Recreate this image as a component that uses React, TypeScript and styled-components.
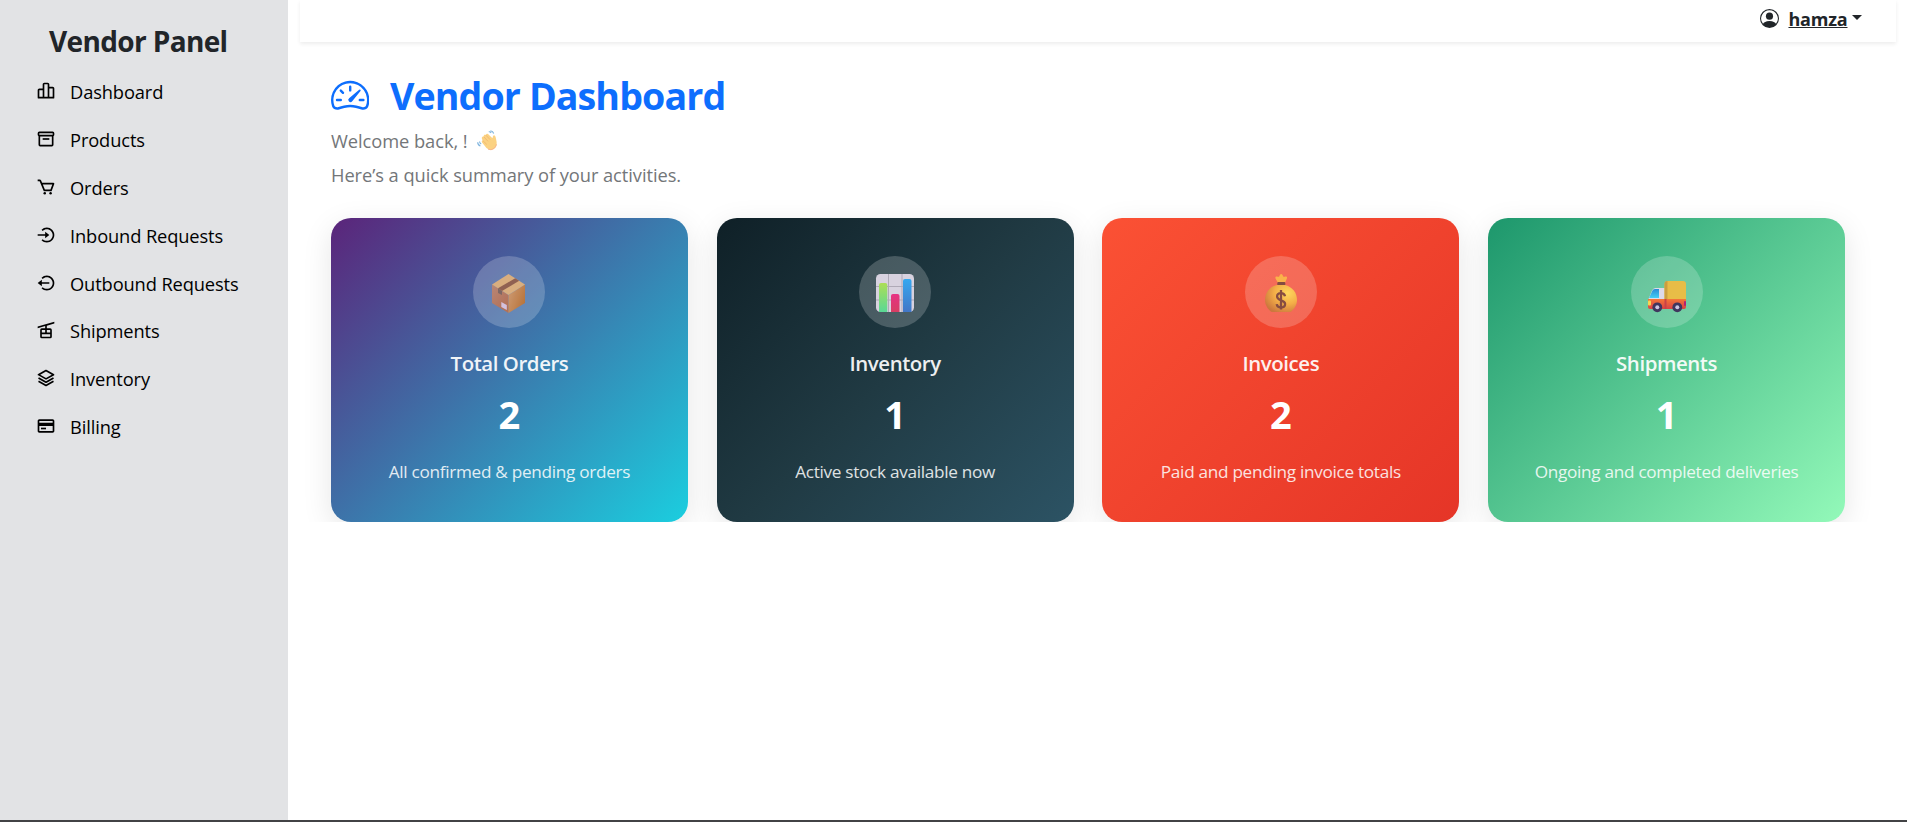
import React from 'react';
import styled, { createGlobalStyle } from 'styled-components';
import type { IconType } from 'react-icons';
import {
  BiBarChartAlt2,
  BiBox,
  BiCart,
  BiLogInCircle,
  BiLogOutCircle,
  BiCableCar,
  BiLayer,
  BiCreditCard,
} from 'react-icons/bi';
import { BsPersonCircle, BsSpeedometer2 } from 'react-icons/bs';

const GlobalStyle = createGlobalStyle`
  *, *::before, *::after { box-sizing: border-box; }
  body {
    margin: 0;
    background: #fff;
    color: #212529;
    font-family: 'Segoe UI', 'Open Sans', 'Noto Sans', sans-serif;
    overflow: hidden;
  }
  h1, h2, h3, p { margin: 0; }
`;

const Page = styled.div`
  display: flex;
  height: 822px;
  border-bottom: 2px solid #424345;
`;

const Sidebar = styled.aside`
  width: 288px;
  flex: none;
  padding-top: 21px;
  background: #e2e3e5;
`;

const Brand = styled.h3`
  padding-left: 49px;
  font-size: 28px;
  font-weight: 700;
  line-height: 40px;
  letter-spacing: -0.64px;
`;

const NavList = styled.nav`
  display: flex;
  flex-direction: column;
  padding-top: 6.8px;
`;

const NavItem = styled.a`
  display: flex;
  align-items: center;
  gap: 14.5px;
  height: 47.85px;
  padding-left: 35.5px;
  color: #000;
  font-size: 18.3px;
  letter-spacing: -0.12px;
  text-decoration: none;

  svg {
    flex: none;
    width: 20px;
    height: 20px;
    margin-top: -1px;
  }
`;

const Main = styled.main`
  flex: 1;
  min-width: 0;
  padding: 0 11px 0 12px;
`;

const TopBar = styled.header`
  display: flex;
  justify-content: flex-end;
  height: 42px;
  padding: 6px 34.5px 0 0;
  background: #fff;
  box-shadow: 0 2px 4px rgba(0, 0, 0, 0.075);
`;

const UserMenu = styled.div`
  display: flex;
  align-items: center;
  height: 25px;
  font-size: 18px;
  font-weight: 700;

  svg {
    width: 19px;
    height: 19px;
    margin-right: 9px;
  }
`;

const UserName = styled.span`
  letter-spacing: -0.2px;
  text-decoration: underline;
  text-decoration-thickness: 1px;
  text-underline-offset: 1px;
`;

const Caret = styled.span`
  margin: -3px 0 0 4px;
  border-top: 5px solid currentColor;
  border-left: 5px solid transparent;
  border-right: 5px solid transparent;
`;

const Content = styled.section`
  padding: 29px 51px 0 31px;
  overflow: hidden;
`;

const Heading = styled.h1`
  display: flex;
  align-items: center;
  height: 48px;
  color: #0d6efd;
  font-size: 37.6px;
  font-weight: 700;
  letter-spacing: -0.9px;

  svg {
    width: 38.4px;
    height: 38.4px;
    margin-right: 20.6px;
  }
`;

const Intro = styled.p`
  display: flex;
  align-items: center;
  height: 34px;
  color: #737679;
  font-size: 18.3px;
  letter-spacing: -0.06px;

  svg {
    width: 21px;
    height: 21px;
    margin-left: 9px;
  }
`;

const IntroBlock = styled.div`
  padding-top: 4px;
  margin-bottom: 27px;
`;

const CardGrid = styled.div`
  display: grid;
  grid-template-columns: repeat(4, 1fr);
  gap: 28.8px;
`;

const Card = styled.article<{ $fill: string }>`
  display: flex;
  flex-direction: column;
  align-items: center;
  height: 304px;
  padding-top: 38px;
  border-radius: 20px;
  background: linear-gradient(135deg, ${(p) => p.$fill});
  box-shadow: 0 8px 30px rgba(0, 0, 0, 0.1);
  color: #fff;
`;

const Badge = styled.div`
  width: 72px;
  height: 72px;
  border-radius: 50%;
  background: rgba(255, 255, 255, 0.2);

  svg {
    display: block;
    width: 72px;
    height: 72px;
    opacity: 0.93;
  }
`;

const CardTitle = styled.h3`
  margin-top: 20px;
  font-size: 20.4px;
  font-weight: 600;
  line-height: 30px;
  letter-spacing: -0.42px;
  opacity: 0.92;
`;

const CardValue = styled.h2`
  margin-top: 13px;
  font-size: 38px;
  font-weight: 700;
  line-height: 46px;
`;

const CardNote = styled.p`
  margin-top: 22px;
  font-size: 17.2px;
  line-height: 26px;
  letter-spacing: -0.3px;
  opacity: 0.85;
`;

const PackageArt = () => (
  <svg viewBox="0 0 72 72">
    <defs>
      <linearGradient id="boxLeft" x1="0" y1="0" x2="0.7" y2="1">
        <stop offset="0" stopColor="#bd8772" />
        <stop offset="1" stopColor="#b96f50" />
      </linearGradient>
      <linearGradient id="boxRight" x1="0" y1="0" x2="1" y2="0.6">
        <stop offset="0" stopColor="#d79f72" />
        <stop offset="1" stopColor="#bf7434" />
      </linearGradient>
    </defs>
    <path d="M19 28.5 35.5 39v18L19 47z" fill="url(#boxLeft)" />
    <path d="M35.5 39 52 28.5V47L35.5 57z" fill="url(#boxRight)" />
    <path d="M35.5 18 52 28.5 35.5 39 19 28.5z" fill="#e2b27c" />
    <path d="M25 32.3 42.2 22.2l4 2.6L29 35z" fill="#945f4b" />
    <path d="M25 32.3l4 2.7v4l-4-2z" fill="#80665f" />
    <path d="M28.3 46l5.5 3v5l-5.5-3z" fill="#dcc6e2" />
  </svg>
);

const ChartArt = () => (
  <svg viewBox="0 0 72 72">
    <defs>
      <linearGradient id="barGreen" x1="0" y1="0" x2="0" y2="1">
        <stop offset="0" stopColor="#b4e856" />
        <stop offset="1" stopColor="#5be29a" />
      </linearGradient>
      <linearGradient id="barPink" x1="0" y1="0" x2="0" y2="1">
        <stop offset="0" stopColor="#f32f87" />
        <stop offset="1" stopColor="#e23c64" />
      </linearGradient>
      <linearGradient id="barBlue" x1="0" y1="0" x2="0" y2="1">
        <stop offset="0" stopColor="#34aefb" />
        <stop offset="1" stopColor="#4279cf" />
      </linearGradient>
    </defs>
    <rect x="17" y="18" width="38" height="38" rx="4.5" fill="#e3dbe9" />
    <path d="M29.5 18v38M43 18v38M17 30.5h38M17 44h38" stroke="#b7afbe" />
    <path d="M20 56V29q0-2 2-2h4.3q2 0 2 2v27z" fill="url(#barGreen)" />
    <path d="M32 56V40q0-2 2-2h4.5q2 0 2 2v16z" fill="url(#barPink)" />
    <path d="M44 56V25q0-2 2-2h4.5q2 0 2 2v31z" fill="url(#barBlue)" />
  </svg>
);

const MoneyArt = () => (
  <svg viewBox="0 0 72 72">
    <defs>
      <radialGradient id="bag" cx="0.7" cy="0.3" r="0.8">
        <stop offset="0" stopColor="#ffe05e" />
        <stop offset="0.5" stopColor="#f5b547" />
        <stop offset="1" stopColor="#c9783c" />
      </radialGradient>
    </defs>
    <path
      d="M33 27 30.5 22.5q-.8-2.5 1.5-2 1.5.5 2 .2l1-2q1.2-1.5 2.4 0l1 2q.8.3 2-.2 2.4-.5 1.5 2L40 27z"
      fill="#fbb84a"
    />
    <rect x="32.3" y="26" width="8" height="3.4" rx="1" fill="#7c4a40" />
    <path d="M32 29h8c7 1.5 12 7.5 12 15 0 5-3 9.5-6.5 12h-19C23 53.5 20 49 20 44c0-7.5 5-13.5 12-15z" fill="url(#bag)" />
    <path
      d="M40 40.2c-.4-2-1.9-3-4-3s-3.9 1.2-3.900 3.400c0 4.800 8 2.700 8 7.400 0 2.300-1.700 3.500-4.100 3.500s-4-1.200-4.300-3.400M36 34v19.500"
      fill="none"
      stroke="#7f4b40"
      strokeWidth="2.3"
    />
  </svg>
);

const TruckArt = () => (
  <svg viewBox="0 0 72 72">
    <defs>
      <linearGradient id="truckBase" x1="0" y1="0" x2="0" y2="1">
        <stop offset="0" stopColor="#ff7030" />
        <stop offset="1" stopColor="#e2383f" />
      </linearGradient>
      <linearGradient id="truckGlass" x1="0" y1="0" x2="0" y2="1">
        <stop offset="0" stopColor="#2488dc" />
        <stop offset="1" stopColor="#3fd0fb" />
      </linearGradient>
    </defs>
    <path d="M17.5 43 21 34.500q1-2.500 3.500-2.500H34v12H17.500z" fill="#e6dcef" />
    <path d="M18 42l3.200-7q.8-2 2.800-2h4v9z" fill="url(#truckGlass)" />
    <path d="M33.5 44V28q0-3 3-3H52q3 0 3 3v16z" fill="#f2bc41" />
    <path d="M33.5 28q0-3 3-3v19h-3z" fill="#d39b38" />
    <path d="M17 43h38v8q0 2-2 2H19q-2 0-2-2z" fill="url(#truckBase)" />
    <path d="M33.5 43h2v10h-2z" fill="#cf3840" />
    <rect x="17" y="44.5" width="3" height="5" rx="1" fill="#ffd84d" />
    <rect x="53" y="45" width="2" height="5" rx="1" fill="#b91571" />
    <circle cx="26.3" cy="51.3" r="4.9" fill="#3d2b59" />
    <circle cx="46.3" cy="51.3" r="4.9" fill="#3d2b59" />
    <circle cx="26.3" cy="51.3" r="2" fill="#d3c6e6" />
    <circle cx="46.3" cy="51.3" r="2" fill="#d3c6e6" />
  </svg>
);

const WaveArt = () => (
  <svg viewBox="0 0 20 20">
    <path
      d="M4.800 11.800q-.9-1.300.6-1.900L4.600 8q-.4-1.500 1-1.800l.8.100q-.3-1.600 1.200-1.900l.9.300q.5-1.500 2-.8l4.200 3.900.6-2.200q.9-1.300 2 0 .5 1 .8 2.800.9 3.500.6 5.600-.6 3.800-4.300 4.700-3.200.6-5.400-1.500z"
      fill="#fbd282"
    />
    <path d="M6.500 6.500l4 4.300M8.500 4.900l4 4.300M5.400 10l4 3.800" stroke="#eeb16e" strokeWidth=".7" fill="none" />
    <path d="M10.500 18.200q3 1.500 5.600-.6 1.900-1.600 2.400-4" stroke="#f6b38b" strokeWidth=".9" fill="none" />
    <path
      d="M11.200 1.700q1.300-.2 2.300 1M12.800.7q2.400.2 3.100 2.600M.7 11.700q0 2.900 2.500 3.400M2.400 11q.1 1.600 1.600 2.300"
      stroke="#7db3dd"
      strokeWidth="1.1"
      fill="none"
    />
  </svg>
);

const navItems: { label: string; icon: IconType }[] = [
  { label: 'Dashboard', icon: BiBarChartAlt2 },
  { label: 'Products', icon: BiBox },
  { label: 'Orders', icon: BiCart },
  { label: 'Inbound Requests', icon: BiLogInCircle },
  { label: 'Outbound Requests', icon: BiLogOutCircle },
  { label: 'Shipments', icon: BiCableCar },
  { label: 'Inventory', icon: BiLayer },
  { label: 'Billing', icon: BiCreditCard },
];

const cards = [
  { title: 'Total Orders', value: 2, note: 'All confirmed & pending orders', art: PackageArt, fill: '#5b247a, #1bcedf' },
  { title: 'Inventory', value: 1, note: 'Active stock available now', art: ChartArt, fill: '#0f2027, #203a43, #2c5364' },
  { title: 'Invoices', value: 2, note: 'Paid and pending invoice totals', art: MoneyArt, fill: '#fb5134, #e53527' },
  { title: 'Shipments', value: 1, note: 'Ongoing and completed deliveries', art: TruckArt, fill: '#1d976c, #93f9b9' },
];

export default function App() {
  return (
    <>
      <GlobalStyle />
      <Page>
        <Sidebar>
          <Brand>Vendor Panel</Brand>
          <NavList>
            {navItems.map(({ label, icon: Icon }) => (
              <NavItem key={label}>
                <Icon />
                {label}
              </NavItem>
            ))}
          </NavList>
        </Sidebar>
        <Main>
          <TopBar>
            <UserMenu>
              <BsPersonCircle />
              <UserName>hamza</UserName>
              <Caret />
            </UserMenu>
          </TopBar>
          <Content>
            <Heading>
              <BsSpeedometer2 />
              Vendor Dashboard
            </Heading>
            <IntroBlock>
              <Intro>
                Welcome back, ! <WaveArt />
              </Intro>
              <Intro>Here’s a quick summary of your activities.</Intro>
            </IntroBlock>
            <CardGrid>
              {cards.map(({ title, value, note, art: Art, fill }) => (
                <Card key={title} $fill={fill}>
                  <Badge>
                    <Art />
                  </Badge>
                  <CardTitle>{title}</CardTitle>
                  <CardValue>{value}</CardValue>
                  <CardNote>{note}</CardNote>
                </Card>
              ))}
            </CardGrid>
          </Content>
        </Main>
      </Page>
    </>
  );
}
